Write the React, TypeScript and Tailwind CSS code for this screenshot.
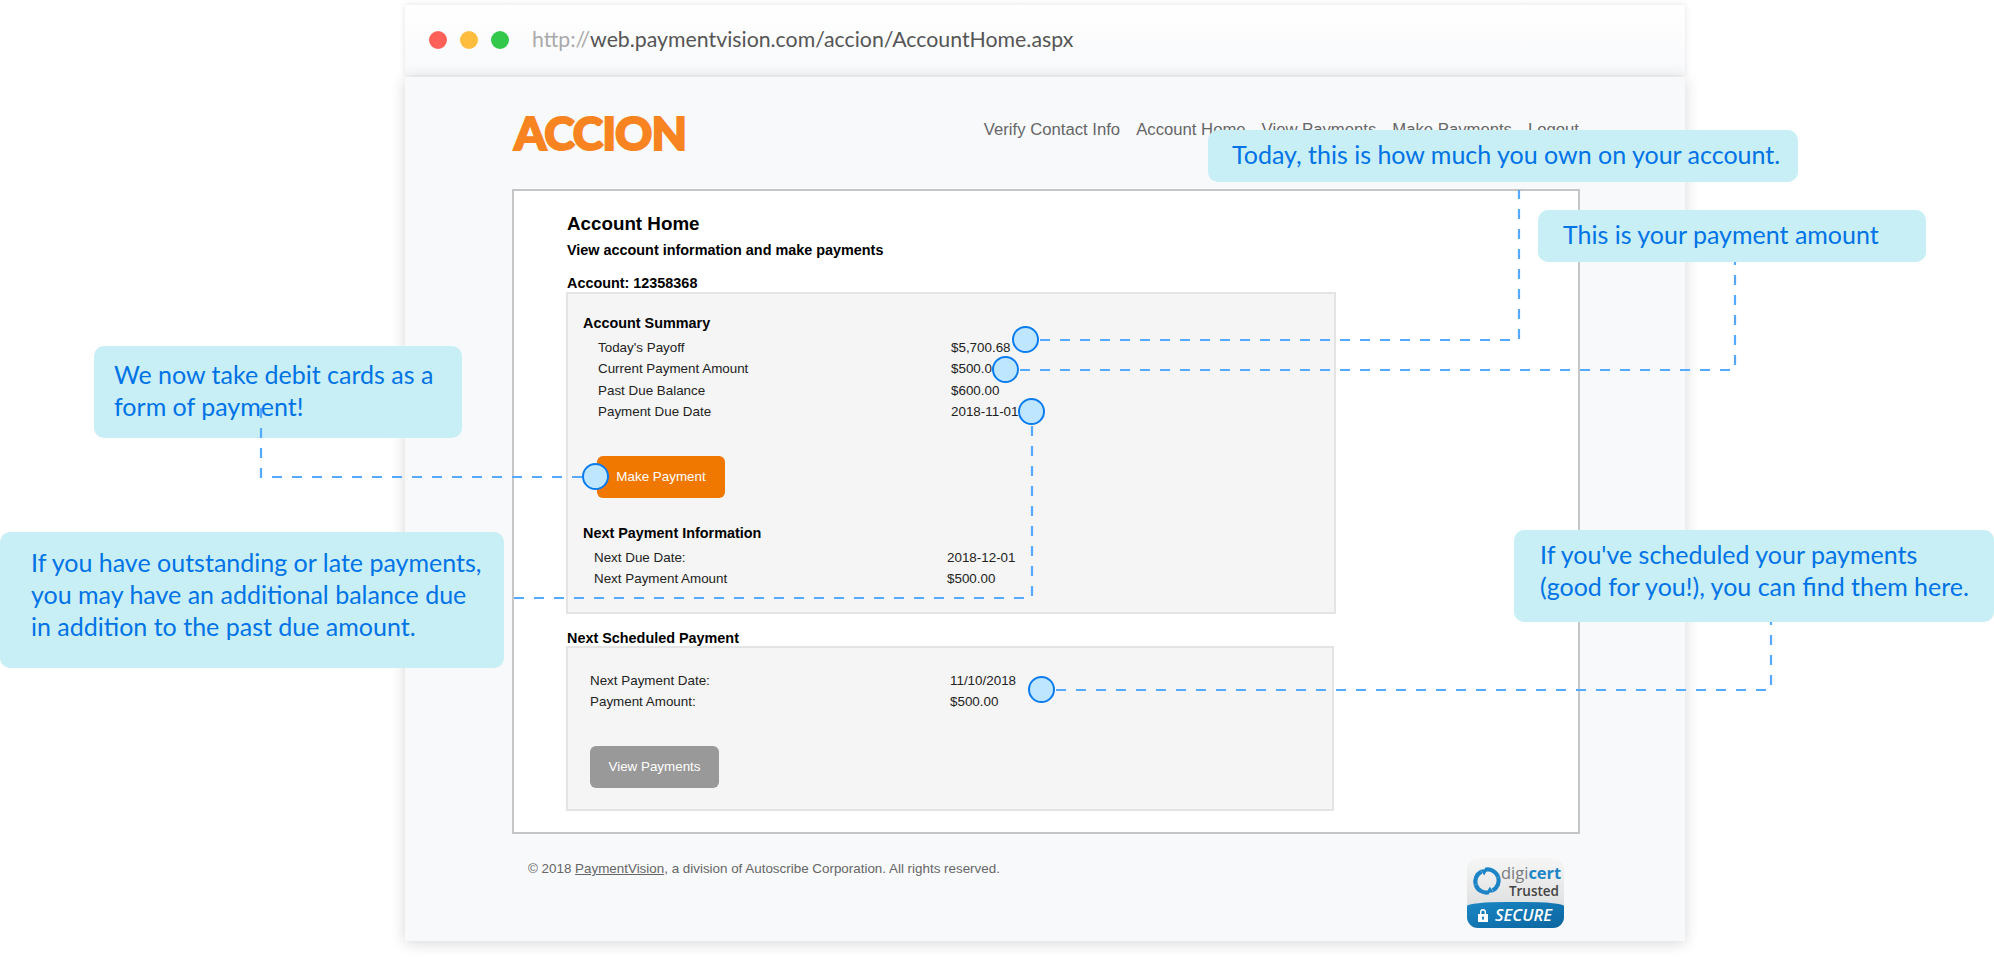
const summaryRows = [
  ["Today's Payoff", "$5,700.68"],
  ["Current Payment Amount", "$500.00"],
  ["Past Due Balance", "$600.00"],
  ["Payment Due Date", "2018-11-01"],
];

const nextRows = [
  ["Next Due Date:", "2018-12-01"],
  ["Next Payment Amount", "$500.00"],
];

const scheduledRows = [
  ["Next Payment Date:", "11/10/2018"],
  ["Payment Amount:", "$500.00"],
];

const navLinks = ["Verify Contact Info", "Account Home", "View Payments", "Make Payments", "Logout"];

const connectors = [
  "M1040 340 H1519 V190",
  "M1020 370 H1735 V262",
  "M1032 426 V598 H512",
  "M582 477 H261 V398",
  "M1056 690 H1771 V622",
];

const dots = [
  "left-[1012px] top-[326px]",
  "left-[992px] top-[356px]",
  "left-[1018px] top-[398px]",
  "left-[582px] top-[463px]",
  "left-[1028px] top-[676px]",
];

function Rows({ rows, className, valueClassName }: { rows: string[][]; className: string; valueClassName: string }) {
  return (
    <div className={className}>
      {rows.map(([label, value]) => (
        <div key={label} className="flex h-[21.33px] items-center text-[13.4px] text-[#222]">
          <span className={valueClassName}>{label}</span>
          <span>{value}</span>
        </div>
      ))}
    </div>
  );
}

function Seal() {
  return (
    <div className="flex h-[70px] w-[97px] flex-col overflow-hidden rounded-[11px] bg-gradient-to-b from-[#f6f6f6] to-[#d5d6d7] font-['Open_Sans',sans-serif]">
      <div className="relative h-[44px]">
        <svg viewBox="0 0 32 32" className="absolute left-[5px] top-[8px] h-[30px] w-[30px]" fill="none" stroke="#1d84c6" strokeWidth="4.5">
          <path d="M4 20 A12 12 0 0 1 10 6" />
          <path d="M9 4 L17 3 L13 10 Z" fill="#1d84c6" stroke="none" />
          <path d="M14 4 A12 12 0 0 1 28 12" />
          <path d="M28 12 A12 12 0 0 1 22 26" />
          <path d="M23 28 L15 29 L19 22 Z" fill="#1d84c6" stroke="none" />
          <path d="M18 28 A12 12 0 0 1 4 20" />
        </svg>
        <div className="absolute left-[34px] top-[5px] text-[16.5px] leading-[20px] text-[#7a7b7d]">
          digi<span className="font-bold text-[#1d84c6]">cert</span>
        </div>
        <div className="absolute right-[5px] top-[24px] text-[13.5px] font-semibold leading-[18px] text-[#444]">Trusted</div>
      </div>
      <div className="flex flex-1 items-center gap-[6px] rounded-t-[40px_4px] bg-gradient-to-br from-[#1a87c4] to-[#0b659f] pl-[10px]">
        <svg viewBox="0 0 12 14" className="h-[14px] w-[12px] shrink-0" fill="white">
          <path d="M3 6 V4 a3 3 0 0 1 6 0 V6 H7.6 V4 a1.6 1.6 0 0 0 -3.2 0 V6 Z" />
          <path fillRule="evenodd" d="M1 6 H11 V14 H1 Z M6 8.5 a1.2 1.2 0 0 0 -.6 2.2 V12 H6.6 V10.7 A1.2 1.2 0 0 0 6 8.5 Z" />
        </svg>
        <span className="text-[16.5px] font-semibold italic leading-none text-white">SECURE</span>
      </div>
    </div>
  );
}

const calloutClass =
  "absolute rounded-[10px] bg-[#c8eff5] font-['Lato',sans-serif] text-[25px] leading-[32px] text-[#0073e6]";

export default function App() {
  return (
    <div className="relative h-[962px] w-[1994px] overflow-hidden bg-white font-['Liberation_Sans',sans-serif]">
      <div className="ml-[405px] w-[1280px] pt-[5px]">
        <div className="flex h-[70px] items-center gap-[13px] bg-gradient-to-b from-white to-[#f8f9fb] pl-[24px] shadow-[0_0_6px_rgba(0,0,0,0.12)]">
          <span className="h-[18px] w-[18px] rounded-full bg-[#ff6159]" />
          <span className="h-[18px] w-[18px] rounded-full bg-[#ffbd3e]" />
          <span className="h-[18px] w-[18px] rounded-full bg-[#32c84a]" />
          <span className="ml-[10px] font-['Lato',sans-serif] text-[21.3px] text-[#555]">
            <span className="text-[#aaa]">http://</span>web.paymentvision.com/accion/AccountHome.aspx
          </span>
        </div>

        <div className="mt-[2px] h-[864px] bg-[#f8f9fb] pl-[107px] shadow-[0_2px_14px_rgba(0,0,0,0.16)]">
          <div className="flex h-[112px] w-[1068px] items-start justify-between">
            <span className="ml-[2px] mt-[28px] font-['Lato',sans-serif] text-[46px] font-black leading-[56px] tracking-[-1px] text-[#f78420] [-webkit-text-stroke:2px_#f78420]">
              ACCION
            </span>
            <nav className="mt-[41px] flex gap-[16px] pr-[1px] text-[16.7px] leading-[24px] text-[#666]">
              {navLinks.map((link) => (
                <span key={link}>{link}</span>
              ))}
            </nav>
          </div>

          <div className="h-[645px] w-[1068px] border-2 border-[#c6c6c6] bg-white pl-[52px] pt-[21px] text-black">
            <h1 className="ml-px h-[24px] text-[18.8px] font-bold leading-[24px]">Account Home</h1>
            <p className="ml-px mt-[4px] h-[20px] text-[14.4px] font-bold leading-[20px]">View account information and make payments</p>
            <p className="ml-px mt-[13px] h-[19px] text-[14.4px] font-bold leading-[20px]">Account: 12358368</p>

            <div className="h-[322px] w-[770px] border-2 border-[#e4e4e4] bg-[#f5f5f5] pl-[15px] pt-[19px]">
              <h2 className="h-[20px] text-[14.4px] font-bold leading-[20px]">Account Summary</h2>
              <Rows rows={summaryRows} className="ml-[15px] mt-[4.4px]" valueClassName="w-[353px]" />
              <button className="ml-[14px] mt-[33px] flex h-[42px] w-[128px] items-center justify-center rounded-[6px] bg-[#f07800] pt-px text-[13.4px] text-white">
                Make Payment
              </button>
              <h2 className="mt-[25px] h-[20px] text-[14.4px] font-bold leading-[20px]">Next Payment Information</h2>
              <Rows rows={nextRows} className="ml-[11px] mt-[4.4px]" valueClassName="w-[353px]" />
            </div>

            <p className="ml-px mt-[14px] h-[19px] text-[14.4px] font-bold leading-[20px]">Next Scheduled Payment</p>
            <div className="-mt-px h-[165px] w-[768px] border-2 border-[#e4e4e4] bg-[#f5f5f5] pl-[22px] pt-[22px]">
              <Rows rows={scheduledRows} className="" valueClassName="w-[360px]" />
              <button className="mt-[33px] flex h-[42px] w-[129px] items-center justify-center rounded-[6px] bg-[#999] text-[13.4px] text-white">
                View Payments
              </button>
            </div>
          </div>

          <div className="flex w-[1068px] items-start justify-between">
            <p className="ml-[16px] mt-[25px] text-[13.4px] leading-[20px] text-[#666]">
              © 2018 <span className="underline">PaymentVision</span>, a division of Autoscribe Corporation. All rights reserved.
            </p>
            <div className="mr-[16px] mt-[24px]">
              <Seal />
            </div>
          </div>
        </div>
      </div>

      <div className={`${calloutClass} left-[1208px] top-[130px] h-[52px] w-[590px] pl-[24px] pt-[8px]`}>
        Today, this is how much you own on your account.
      </div>
      <div className={`${calloutClass} left-[1538px] top-[210px] h-[52px] w-[388px] pl-[25px] pt-[8px]`}>
        This is your payment amount
      </div>
      <div className={`${calloutClass} left-[94px] top-[346px] h-[92px] w-[368px] pl-[20px] pt-[12px]`}>
        We now take debit cards as a<br />form of payment!
      </div>
      <div className={`${calloutClass} left-0 top-[532px] h-[136px] w-[504px] pl-[31px] pt-[14px]`}>
        If you have outstanding or late payments,<br />you may have an additional balance due<br />in addition to the past due amount.
      </div>
      <div className={`${calloutClass} left-[1514px] top-[530px] h-[92px] w-[480px] pl-[26px] pt-[8px]`}>
        If you've scheduled your payments<br />(good for you!), you can find them here.
      </div>

      <svg className="absolute left-0 top-0 h-[962px] w-[1994px]" fill="none" stroke="#55aaff" strokeWidth="2.2" strokeDasharray="10 10">
        {connectors.map((d) => (
          <path key={d} d={d} />
        ))}
      </svg>

      {dots.map((pos) => (
        <span key={pos} className={`absolute h-[27px] w-[27px] rounded-full border-2 border-[#0a7cf0] bg-[#bfe6ff] ${pos}`} />
      ))}
    </div>
  );
}
